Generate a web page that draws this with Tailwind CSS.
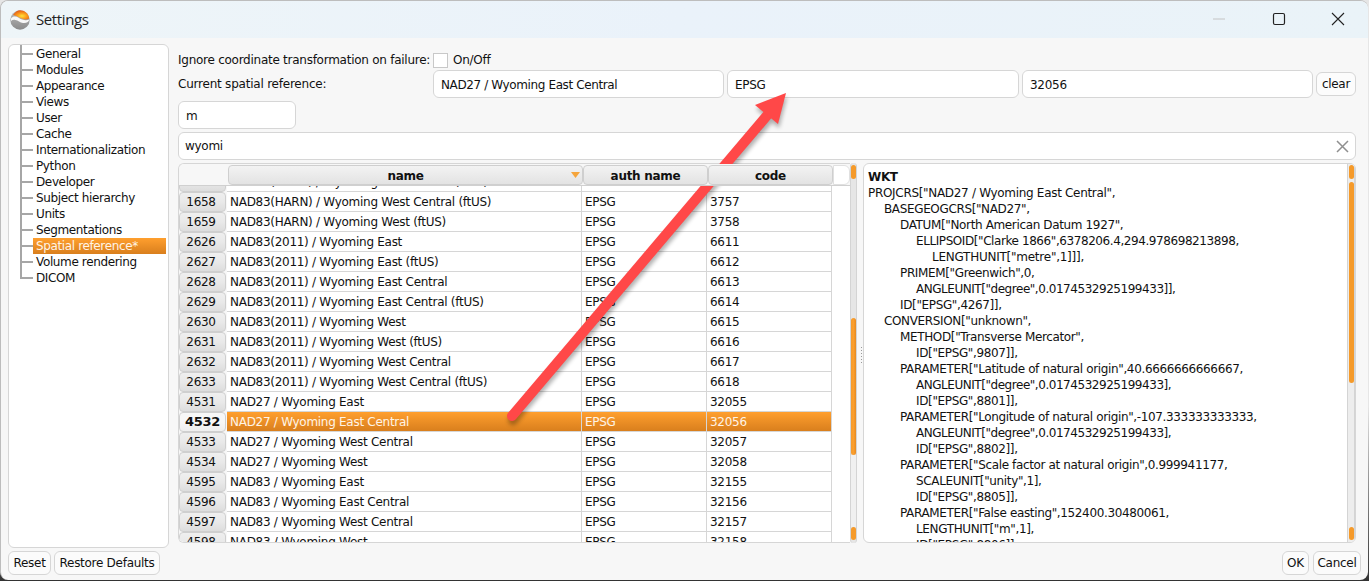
<!DOCTYPE html>
<html lang="en">
<head>
  <meta charset="UTF-8" />
  <title>Settings</title>
  <script src="https://cdn.jsdelivr.net/npm/@tailwindcss/browser@4"></script>
</head>
<body class="bg-gradient-to-b from-[#e6e6e6] via-[#e6e6e6] via-70% to-[#333] h-[581px] overflow-hidden font-['DejaVu_Sans',sans-serif] text-[12px] text-[#111] tracking-[-0.28px]">
  <div class="relative h-[580px] mr-px rounded-lg bg-[#f7f7f7] border-t border-l border-[#bdbdbd] flex flex-col overflow-hidden">

    <!-- title bar -->
    <div class="h-[37px] shrink-0 bg-gradient-to-r from-[#eef5f8] via-[#eaf2fa] to-[#eaf3f8] flex items-center pl-[9px]">
      <svg width="20" height="20" viewBox="0 0 20 20">
        <defs>
          <radialGradient id="logoTop" cx=".55" cy=".62" r=".62"><stop offset="0" stop-color="#ffe23d"/><stop offset=".5" stop-color="#fb9a1c"/><stop offset="1" stop-color="#e0591a"/></radialGradient>
          <linearGradient id="logoBottom" x1="0" y1="0" x2="0" y2="1"><stop offset="0" stop-color="#bdbdbd"/><stop offset="1" stop-color="#8a8a8a"/></linearGradient>
        </defs>
        <circle cx="10" cy="10" r="9.7" fill="url(#logoBottom)"/>
        <path d="M3 5C5 2 7.500.3 10 .3c4.500 0 8.500 3 9.300 8.200C16 10 13.500 9.500 11 8.300 8 7 5.500 5.500 3 5z" fill="url(#logoTop)"/>
        <path d="M1 8.500C3 6 6 6 9 8c3 2 7 3 10.500 1.500-.5 2-3 4-6.500 3.500-3-.5-5-2.500-7.500-3C3.500 9.600 2 10 1 11z" fill="#f8f8f8"/>
      </svg>
      <span class="ml-[6px] text-[15px] tracking-[-0.4px] font-['Open_Sans',sans-serif] text-[#222]">Settings</span>
      <div class="ml-auto mb-[2px] flex items-center">
        <svg width="14" height="14" viewBox="0 0 14 14" class="mr-[46px]"><path d="M1 7h12" stroke="#c4c4c4" stroke-width="1"/></svg>
        <svg width="14" height="14" viewBox="0 0 14 14" class="mr-[45px]"><rect x="1.500" y="1.500" width="11" height="11" rx="1.500" fill="none" stroke="#222" stroke-width="1.200"/></svg>
        <svg width="14" height="14" viewBox="0 0 14 14" class="mr-[23px]"><path d="M1 1l12 12M13 1L1 13" stroke="#222" stroke-width="1.100"/></svg>
      </div>
    </div>

    <!-- body -->
    <div class="flex-1 flex flex-col px-[7px] pt-[6px] pb-[5px] min-h-0">
      <div class="flex-1 flex min-h-0">

        <!-- tree -->
        <div class="w-[161px] shrink-0 bg-white border border-[#d6d6d6] rounded-md pt-[1px] relative tracking-[-0.37px]">
          <div class="absolute left-[11px] top-0 h-[232px] w-[2px] bg-[#a6a6a6]"></div>
          <div class="flex flex-col">
            <div class="h-4 flex items-center"><span class="ml-[11px] w-[13px] h-[2px] bg-[#a6a6a6]"></span><span class="ml-[3px]">General</span></div>
            <div class="h-4 flex items-center"><span class="ml-[11px] w-[13px] h-[2px] bg-[#a6a6a6]"></span><span class="ml-[3px]">Modules</span></div>
            <div class="h-4 flex items-center"><span class="ml-[11px] w-[13px] h-[2px] bg-[#a6a6a6]"></span><span class="ml-[3px]">Appearance</span></div>
            <div class="h-4 flex items-center"><span class="ml-[11px] w-[13px] h-[2px] bg-[#a6a6a6]"></span><span class="ml-[3px]">Views</span></div>
            <div class="h-4 flex items-center"><span class="ml-[11px] w-[13px] h-[2px] bg-[#a6a6a6]"></span><span class="ml-[3px]">User</span></div>
            <div class="h-4 flex items-center"><span class="ml-[11px] w-[13px] h-[2px] bg-[#a6a6a6]"></span><span class="ml-[3px]">Cache</span></div>
            <div class="h-4 flex items-center"><span class="ml-[11px] w-[13px] h-[2px] bg-[#a6a6a6]"></span><span class="ml-[3px]">Internationalization</span></div>
            <div class="h-4 flex items-center"><span class="ml-[11px] w-[13px] h-[2px] bg-[#a6a6a6]"></span><span class="ml-[3px]">Python</span></div>
            <div class="h-4 flex items-center"><span class="ml-[11px] w-[13px] h-[2px] bg-[#a6a6a6]"></span><span class="ml-[3px]">Developer</span></div>
            <div class="h-4 flex items-center"><span class="ml-[11px] w-[13px] h-[2px] bg-[#a6a6a6]"></span><span class="ml-[3px]">Subject hierarchy</span></div>
            <div class="h-4 flex items-center"><span class="ml-[11px] w-[13px] h-[2px] bg-[#a6a6a6]"></span><span class="ml-[3px]">Units</span></div>
            <div class="h-4 flex items-center"><span class="ml-[11px] w-[13px] h-[2px] bg-[#a6a6a6]"></span><span class="ml-[3px]">Segmentations</span></div>
            <div class="h-4 flex items-center"><span class="ml-[11px] w-[13px] h-[2px] bg-[#a6a6a6]"></span><span class="pl-[3px] w-[133px] h-4 leading-4 text-[#fff4e6] bg-gradient-to-b from-[#ff9f2e] to-[#d97f1d]">Spatial reference*</span></div>
            <div class="h-4 flex items-center"><span class="ml-[11px] w-[13px] h-[2px] bg-[#a6a6a6]"></span><span class="ml-[3px]">Volume rendering</span></div>
            <div class="h-4 flex items-center"><span class="ml-[11px] w-[13px] h-[2px] bg-[#a6a6a6]"></span><span class="ml-[3px]">DICOM</span></div>
          </div>
        </div>

        <!-- right side -->
        <div class="flex-1 min-w-0 ml-[9px] mr-[5px] flex flex-col">
          <div class="h-[20px] mt-[6px] shrink-0 flex items-center tracking-[-0.26px]">
            <span>Ignore coordinate transformation on failure:</span>
            <span class="ml-[3px] w-[15px] h-[15px] bg-white border border-[#c8c8c8]"></span>
            <span class="ml-[5px]">On/Off</span>
          </div>
          <div class="flex items-center h-[28px] shrink-0">
            <span class="w-[255px] shrink-0 tracking-[-0.22px]">Current spatial reference:</span>
            <div class="w-[291px] h-[28px] bg-white border border-[#d6d6d6] rounded-md flex items-center pl-[7px] pt-[1px] tracking-[-0.38px]">NAD27 / Wyoming East Central</div>
            <div class="ml-[3px] w-[292px] h-[28px] bg-white border border-[#d6d6d6] rounded-md flex items-center pl-[7px] pt-[1px]">EPSG</div>
            <div class="ml-[3px] w-[291px] h-[28px] bg-white border border-[#d6d6d6] rounded-md flex items-center pl-[7px] pt-[1px]">32056</div>
            <div class="ml-[3px] w-[40px] h-[24px] bg-white/60 border border-[#d6d6d6] rounded-md flex items-center justify-center">clear</div>
          </div>
          <div class="w-[118px] h-[28px] mt-[3px] shrink-0 bg-white border border-[#d6d6d6] rounded-md flex items-center pl-[7px] pt-[2px]">m</div>
          <div class="h-[28px] mt-[3px] shrink-0 bg-white border border-[#d6d6d6] rounded-md flex items-center pl-[6px] pr-[6px]">
            <span>wyomi</span>
            <svg width="13" height="13" viewBox="0 0 13 13" class="ml-auto"><path d="M1 1l11 11M12 1L1 12" stroke="#8f8f8f" stroke-width="1.500"/></svg>
          </div>

          <div class="flex-1 min-h-0 mt-[3px] mb-[5px] flex">
            <!-- table -->
            <div class="w-[672px] shrink-0 border border-[#d6d6d6] border-r-0 rounded-l-md bg-[#f7f7f7] overflow-hidden flex flex-col">
              <div class="relative z-10 h-[22px] shrink-0 flex items-stretch border-b border-[#d0d0d0] bg-[#f7f7f7] pt-[1px]">
                <div class="w-[49px] shrink-0"></div>
                <div class="w-[355px] shrink-0 relative bg-gradient-to-b from-[#f3f3f3] to-[#e3e3e3] border border-[#cfcfcf] rounded-sm text-center font-bold pt-[1px] leading-[18px]">name
                  <svg width="9" height="6" viewBox="0 0 9 6" class="absolute right-[2px] top-[6px]"><path d="M0 0h9L4.500 6z" fill="#f5a53c"/></svg>
                </div>
                <div class="w-[125px] shrink-0 bg-gradient-to-b from-[#f3f3f3] to-[#e3e3e3] border border-[#cfcfcf] rounded-sm text-center font-bold pt-[1px] leading-[18px]">auth name</div>
                <div class="w-[125px] shrink-0 bg-gradient-to-b from-[#f3f3f3] to-[#e3e3e3] border border-[#cfcfcf] rounded-sm text-center font-bold pt-[1px] leading-[18px]">code</div>
                <div class="flex-1 bg-white border border-[#e0e0e0] rounded-r-md"></div>
              </div>
              <div class="flex-1 min-h-0 overflow-hidden bg-white">
                <div id="rows" class="-mt-[14px]"></div>
              </div>
            </div>
            <!-- table scrollbar -->
            <div class="w-[7px] shrink-0 rounded-sm bg-[#e6e6e6] border-x border-[#d4d4d4] flex flex-col items-center pt-[2px] pb-[3px]">
              <div class="w-[5px] h-[14px] rounded-sm bg-[#f59a2a]"></div>
              <div class="w-[5px] h-[139px] bg-[#e6e6e6]"></div>
              <div class="w-[5px] h-[137px] rounded-sm bg-gradient-to-r from-[#f59a2a] via-[#fb9f2e] to-[#e68a20]"></div>
              <div class="w-[5px] flex-1 bg-[#f0f0f0]"></div>
              <div class="w-[5px] h-[13px] rounded-sm bg-[#f59a2a]"></div>
            </div>
            <!-- splitter -->
            <div class="w-[6px] shrink-0 flex flex-col items-center justify-center gap-[2px] pl-[3px] pt-[4px]">
              <span class="w-px h-px bg-[#999]"></span><span class="w-px h-px bg-[#999]"></span><span class="w-px h-px bg-[#999]"></span><span class="w-px h-px bg-[#999]"></span><span class="w-px h-px bg-[#999]"></span><span class="w-px h-px bg-[#999]"></span>
            </div>
            <!-- wkt -->
            <div class="flex-1 min-w-0 bg-white border border-[#d6d6d6] rounded-md overflow-hidden relative pl-[4px] pt-[5px] leading-4 tracking-[-0.36px]">
              <div class="font-bold">WKT</div>
              <div class="tracking-[-0.31px]">PROJCRS["NAD27 / Wyoming East Central",</div>
              <div class="pl-4">BASEGEOGCRS["NAD27",</div>
              <div class="pl-8">DATUM["North American Datum 1927",</div>
              <div class="pl-12 tracking-[-0.42px]">ELLIPSOID["Clarke 1866",6378206.4,294.978698213898,</div>
              <div class="pl-16 tracking-[-0.25px]">LENGTHUNIT["metre",1]]],</div>
              <div class="pl-8">PRIMEM["Greenwich",0,</div>
              <div class="pl-12 tracking-[-0.46px]">ANGLEUNIT["degree",0.0174532925199433]],</div>
              <div class="pl-8">ID["EPSG",4267]],</div>
              <div class="pl-4">CONVERSION["unknown",</div>
              <div class="pl-8">METHOD["Transverse Mercator",</div>
              <div class="pl-12">ID["EPSG",9807]],</div>
              <div class="pl-8">PARAMETER["Latitude of natural origin",40.6666666666667,</div>
              <div class="pl-12 tracking-[-0.46px]">ANGLEUNIT["degree",0.0174532925199433],</div>
              <div class="pl-12">ID["EPSG",8801]],</div>
              <div class="pl-8">PARAMETER["Longitude of natural origin",-107.333333333333,</div>
              <div class="pl-12 tracking-[-0.46px]">ANGLEUNIT["degree",0.0174532925199433],</div>
              <div class="pl-12">ID["EPSG",8802]],</div>
              <div class="pl-8">PARAMETER["Scale factor at natural origin",0.999941177,</div>
              <div class="pl-12">SCALEUNIT["unity",1],</div>
              <div class="pl-12">ID["EPSG",8805]],</div>
              <div class="pl-8">PARAMETER["False easting",152400.30480061,</div>
              <div class="pl-12">LENGTHUNIT["m",1],</div>
              <div class="pl-12">ID["EPSG",8806]],</div>
              <div class="absolute right-0 top-0 bottom-0 w-[8px] bg-[#ededed] border-x border-[#d4d4d4] flex flex-col items-center pt-[1px] pb-[2px]">
                <div class="w-[5px] h-[14px] rounded-sm bg-[#f59a2a]"></div>
                <div class="w-[5px] h-[201px] mt-[3px] rounded-sm bg-[#f59a2a]"></div>
                <div class="flex-1"></div>
                <div class="w-[5px] h-[13px] rounded-sm bg-[#f59a2a]"></div>
              </div>
            </div>
          </div>
        </div>
      </div>

      <!-- bottom buttons -->
      <div class="h-[24px] shrink-0 mt-[3px] flex">
        <div class="w-[43px] bg-white/50 border border-[#d6d6d6] rounded-md flex items-center justify-center">Reset</div>
        <div class="ml-[3px] w-[106px] bg-white/50 border border-[#d6d6d6] rounded-md flex items-center justify-center">Restore Defaults</div>
        <div class="ml-auto w-[27px] bg-white/50 border border-[#d6d6d6] rounded-md flex items-center justify-center">OK</div>
        <div class="ml-[4px] w-[48px] bg-white/50 border border-[#d6d6d6] rounded-md flex items-center justify-center">Cancel</div>
      </div>
    </div>
  </div>

  <!-- annotation arrow drawn over the screenshot -->
  <svg class="absolute left-0 top-0 pointer-events-none" width="1369" height="581" viewBox="0 0 1369 581">
    <defs><filter id="soft" x="-20%" y="-20%" width="140%" height="140%"><feGaussianBlur stdDeviation="2"/></filter></defs>
    <g filter="url(#soft)" opacity=".3" transform="translate(1 4)">
      <path d="M512 416L770 112" stroke="#000" stroke-width="10" stroke-linecap="round"/>
      <path d="M786 93L755 105L778 124z" fill="#000"/>
    </g>
    <path d="M512 416L770 112" stroke="#ff4848" stroke-width="10" stroke-linecap="round"/>
    <path d="M786 93L755 105L778 124z" fill="#ff4848"/>
  </svg>

  <script>
    var rows = [
      ['1657','NAD83(HARN) / Wyoming East Central (ftUS)','EPSG','3756'],
      ['1658','NAD83(HARN) / Wyoming West Central (ftUS)','EPSG','3757'],
      ['1659','NAD83(HARN) / Wyoming West (ftUS)','EPSG','3758'],
      ['2626','NAD83(2011) / Wyoming East','EPSG','6611'],
      ['2627','NAD83(2011) / Wyoming East (ftUS)','EPSG','6612'],
      ['2628','NAD83(2011) / Wyoming East Central','EPSG','6613'],
      ['2629','NAD83(2011) / Wyoming East Central (ftUS)','EPSG','6614'],
      ['2630','NAD83(2011) / Wyoming West','EPSG','6615'],
      ['2631','NAD83(2011) / Wyoming West (ftUS)','EPSG','6616'],
      ['2632','NAD83(2011) / Wyoming West Central','EPSG','6617'],
      ['2633','NAD83(2011) / Wyoming West Central (ftUS)','EPSG','6618'],
      ['4531','NAD27 / Wyoming East','EPSG','32055'],
      ['4532','NAD27 / Wyoming East Central','EPSG','32056'],
      ['4533','NAD27 / Wyoming West Central','EPSG','32057'],
      ['4534','NAD27 / Wyoming West','EPSG','32058'],
      ['4595','NAD83 / Wyoming East','EPSG','32155'],
      ['4596','NAD83 / Wyoming East Central','EPSG','32156'],
      ['4597','NAD83 / Wyoming West Central','EPSG','32157'],
      ['4598','NAD83 / Wyoming West','EPSG','32158']
    ];
    var html = '';
    rows.forEach(function (r) {
      var sel = r[0] === '4532';
      var rowCls = sel ? 'bg-gradient-to-b from-[#ff9f2e] to-[#d97f1d] text-[#fff4e6]' : 'bg-white';
      var numCls = sel ? 'font-bold text-[13px] from-[#f7f7f7] via-[#f7f7f7] to-[#efefef]' : 'from-[#efefef] via-[#e9e9e9] to-[#dddddd] pr-[3px]';
      html += '<div class="flex h-[20px] w-[653px] bg-[#f7f7f7]">' +
        '<div class="w-[47px] shrink-0 mr-px bg-gradient-to-b border border-[#cfcfcf] rounded-sm flex items-center justify-center ' + numCls + '">' + r[0] + '</div>' +
        '<div class="flex-1 flex leading-[20px] border-b border-[#d6d6d6] ' + rowCls + '">' +
          '<div class="w-[355px] pl-[3px] border-r border-[#d6d6d6]">' + r[1] + '</div>' +
          '<div class="w-[125px] pl-[3px] border-r border-[#d6d6d6]">' + r[2] + '</div>' +
          '<div class="flex-1 pl-[3px] border-r border-[#d6d6d6]">' + r[3] + '</div>' +
        '</div></div>';
    });
    document.getElementById('rows').innerHTML = html;
  </script>
</body>
</html>
